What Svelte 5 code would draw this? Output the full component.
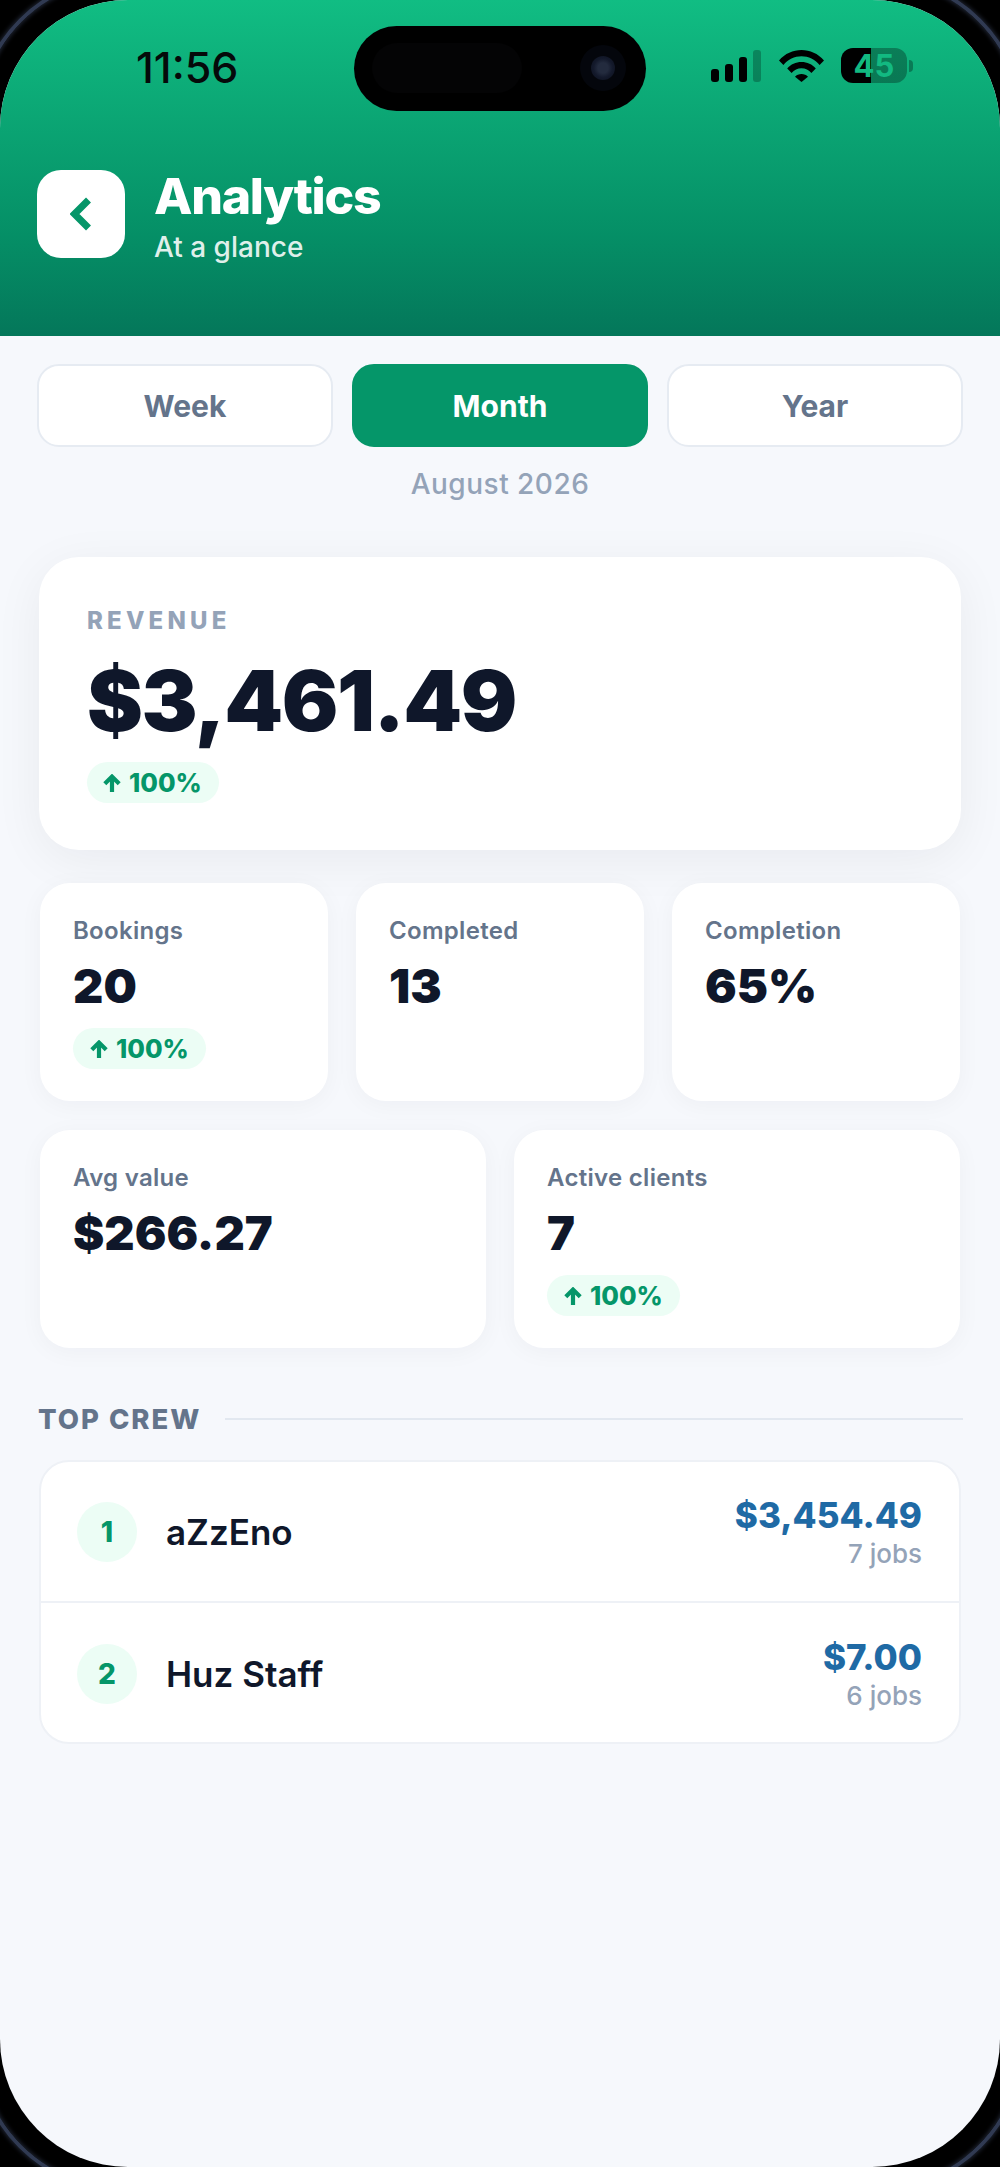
<script>
  const row1 = [
    { label: 'Bookings', value: '20', up: true },
    { label: 'Completed', value: '13' },
    { label: 'Completion', value: '65%' }
  ];
  const row2 = [
    { label: 'Avg value', value: '$266.27' },
    { label: 'Active clients', value: '7', up: true }
  ];
  const crew = [
    { rank: 1, name: 'aZzEno', amount: '$3,454.49', jobs: '7 jobs' },
    { rank: 2, name: 'Huz Staff', amount: '$7.00', jobs: '6 jobs' }
  ];
</script>

{#snippet pill()}
  <span class="pill">
    <svg class="arrow" viewBox="0 0 18 18" width="18" height="18" aria-hidden="true">
      <path d="M9 18V3.500M1.800 9.800 9 2.600l7.200 7.200" fill="none" stroke="currentColor" stroke-width="4.2" />
    </svg>
    100%
  </span>
{/snippet}

{#snippet stat(s)}
  <div class="stat">
    <div class="stat-label">{s.label}</div>
    <div class="stat-value">{s.value}</div>
    {#if s.up}{@render pill()}{/if}
  </div>
{/snippet}

<div class="phone">
  <div class="ring"></div>
  <div class="screen">
    <header class="header">
      <div class="status">
        <span class="time">11:56</span>
        <div class="status-icons">
          <div class="signal">
            <i class="b1"></i><i class="b2"></i><i class="b3"></i><i class="b4"></i>
          </div>
          <svg class="wifi" viewBox="0 0 45 33" width="45" height="33" aria-hidden="true">
            <path d="M0 11.5C6 4.5 14 1 22.5 1S39 4.5 45 11.5l-4.4 4.4C36 10.2 29.5 7.2 22.5 7.2S9 10.2 4.4 15.9Z" />
            <path d="M8.2 19.6c3.6-4.4 8.6-6.6 14.3-6.6s10.7 2.2 14.3 6.6l-4.4 4.3c-2.500-3-6-4.700-9.900-4.700s-7.400 1.700-9.900 4.700Z" />
            <path d="M16 27.700c1.500-1.800 3.900-2.800 6.500-2.800s5 1 6.500 2.800L22.500 33Z" />
          </svg>
          <div class="battery"><span>45</span></div>
          <i class="cap"></i>
        </div>
      </div>
      <div class="island">
        <div class="island-pill"></div>
        <div class="camera"><div class="lens"></div></div>
      </div>
      <div class="title-row">
        <div class="back">
          <svg viewBox="0 0 22 34" width="22" height="34" aria-hidden="true">
            <path d="M18.500 3 4.500 17l14 14" fill="none" stroke="#059669" stroke-width="7" />
          </svg>
        </div>
        <div class="title-text">
          <h1>Analytics</h1>
          <p>At a glance</p>
        </div>
      </div>
    </header>

    <main class="content">
      <div class="tabs">
        <div class="tab">Week</div>
        <div class="tab active">Month</div>
        <div class="tab">Year</div>
      </div>
      <div class="period">August 2026</div>

      <section class="revenue">
        <div class="rev-label">REVENUE</div>
        <div class="rev-value">$3,461.49</div>
        {@render pill()}
      </section>

      <div class="grid three">
        {#each row1 as s}{@render stat(s)}{/each}
      </div>
      <div class="grid two">
        {#each row2 as s}{@render stat(s)}{/each}
      </div>

      <div class="section-head">
        <span>TOP CREW</span>
        <div class="rule"></div>
      </div>

      <div class="crew">
        {#each crew as c}
          <div class="crew-row">
            <div class="rank">{c.rank}</div>
            <div class="name">{c.name}</div>
            <div class="right">
              <div class="amount">{c.amount}</div>
              <div class="jobs">{c.jobs}</div>
            </div>
          </div>
        {/each}
      </div>
    </main>
  </div>
</div>

<style>
  :global(body) {
    margin: 0;
    background: #000;
  }
  .phone {
    position: relative;
    width: 1000px;
    height: 2167px;
    overflow: hidden;
    background: #000;
    font-family: Inter, 'Liberation Sans', sans-serif;
  }
  .ring {
    position: absolute;
    inset: -25px;
    border-radius: 150px;
    border: 4px solid #303a52;
    box-shadow: 0 0 4px 1px rgba(70, 84, 115, 0.45), inset 0 0 4px 1px rgba(70, 84, 115, 0.45);
  }
  .screen {
    position: relative;
    width: 1000px;
    height: 2167px;
    border-radius: 128px;
    overflow: hidden;
    background: #f6f8fc;
  }
  .header {
    position: relative;
    height: 336px;
    box-sizing: border-box;
    background: linear-gradient(180deg, #11bd83 0%, #0ba674 35%, #058f66 70%, #04775a 100%);
  }
  .status {
    height: 134px;
    box-sizing: border-box;
    padding: 42px 0 0 136px;
    display: flex;
    justify-content: space-between;
  }
  .time {
    font-size: 43px;
    line-height: 50px;
    font-weight: 500;
    color: #050a0a;
  }
  .status-icons {
    display: flex;
    align-items: flex-start;
    padding: 7px 87px 0 0;
  }
  .signal {
    display: flex;
    align-items: flex-end;
    gap: 6px;
    height: 33px;
    margin-right: 18px;
  }
  .signal i {
    width: 8px;
    background: #000;
    border-radius: 3px;
    display: block;
  }
  .b1 { height: 13px; }
  .b2 { height: 18px; }
  .b3 { height: 25px; }
  .signal .b4 {
    height: 32px;
    background: rgba(0, 0, 0, 0.25);
  }
  .wifi {
    fill: #000;
    margin-right: 17px;
  }
  .battery {
    width: 66px;
    height: 35px;
    border-radius: 12px;
    background: linear-gradient(90deg, #000 45%, rgba(0, 0, 0, 0.3) 45%);
    color: #12b981;
    font-size: 31px;
    font-weight: 700;
    line-height: 35px;
    text-align: center;
    margin-top: -1px;
  }
  .cap {
    width: 4px;
    height: 12px;
    margin: 11px 0 0 2px;
    border-radius: 0 4px 4px 0;
    background: rgba(0, 0, 0, 0.3);
    display: block;
  }
  .island {
    position: absolute;
    left: 354px;
    top: 26px;
    width: 292px;
    height: 85px;
    border-radius: 43px;
    background: #000;
  }
  .island-pill {
    position: absolute;
    left: 18px;
    top: 17px;
    width: 150px;
    height: 50px;
    border-radius: 25px;
    background: #040405;
  }
  .camera {
    position: absolute;
    left: 226px;
    top: 19px;
    width: 46px;
    height: 46px;
    border-radius: 50%;
    background: #04060c;
  }
  .lens {
    margin: 11px;
    width: 24px;
    height: 24px;
    border-radius: 50%;
    background: radial-gradient(circle, #232b3e 0 30%, #141a2c 55%, #0a0e1a 100%);
  }
  .title-row {
    display: flex;
    align-items: flex-start;
    gap: 29px;
    padding: 36px 37px 0;
  }
  .back {
    width: 88px;
    height: 88px;
    border-radius: 24px;
    background: #fff;
    display: flex;
    align-items: center;
    justify-content: center;
  }
  .title-text {
    margin-top: -1px;
  }
  h1 {
    margin: 0;
    font-size: 50px;
    line-height: 54px;
    font-weight: 800;
    letter-spacing: -1.3px;
    color: #fff;
  }
  .title-row p {
    margin: 8px 0 0;
    font-size: 28px;
    line-height: 32px;
    font-weight: 500;
    color: rgba(255, 255, 255, 0.88);
  }
  .content {
    padding: 28px 39px 0;
  }
  .tabs {
    display: grid;
    grid-template-columns: repeat(3, 1fr);
    gap: 19px;
    margin: 0 -2px;
  }
  .tab {
    height: 83px;
    box-sizing: border-box;
    border: 2px solid #e6ebf2;
    border-radius: 22px;
    background: #fff;
    color: #64748b;
    font-size: 30px;
    font-weight: 700;
    display: flex;
    align-items: center;
    justify-content: center;
  }
  .tab.active {
    background: #059669;
    border-color: #059669;
    color: #fff;
  }
  .period {
    margin-top: 20px;
    text-align: center;
    font-size: 28px;
    line-height: 34px;
    font-weight: 500;
    letter-spacing: 0.5px;
    color: #94a3b8;
  }
  .revenue {
    margin-top: 56px;
    height: 293px;
    box-sizing: border-box;
    padding: 48px 48px 0;
    border-radius: 40px;
    background: #fff;
    box-shadow: 0 10px 50px rgba(15, 23, 42, 0.06);
  }
  .rev-label {
    font-size: 24px;
    line-height: 32px;
    font-weight: 800;
    letter-spacing: 4.2px;
    color: #94a3b8;
  }
  .rev-value {
    margin-top: 16px;
    font-size: 84px;
    line-height: 96px;
    font-weight: 900;
    letter-spacing: -1.5px;
    color: #0f172a;
  }
  .pill {
    display: inline-flex;
    align-items: center;
    gap: 8px;
    height: 41px;
    padding: 0 17px 0 16px;
    border-radius: 21px;
    background: #ecfdf5;
    color: #059669;
    font-size: 25.500px;
    font-weight: 800;
  }
  .revenue .pill {
    margin-top: 13px;
    vertical-align: top;
  }
  .arrow {
    flex: none;
  }
  .grid {
    display: grid;
    gap: 28px;
    margin: 33px 1px 0;
  }
  .three {
    grid-template-columns: repeat(3, 1fr);
  }
  .two {
    grid-template-columns: repeat(2, 1fr);
    margin-top: 29px;
  }
  .stat {
    height: 218px;
    box-sizing: border-box;
    padding: 32px 33px 0;
    border-radius: 30px;
    background: #fff;
    box-shadow: 0 4px 24px rgba(15, 23, 42, 0.04);
  }
  .stat-label {
    font-size: 24px;
    line-height: 32px;
    font-weight: 600;
    letter-spacing: 0.3px;
    color: #64748b;
  }
  .stat-value {
    margin-top: 11px;
    font-size: 47px;
    line-height: 56px;
    font-weight: 900;
    color: #0f172a;
  }
  .stat .pill {
    margin-top: 14px;
    vertical-align: top;
    padding: 0 17px;
  }
  .section-head {
    display: flex;
    align-items: center;
    gap: 24px;
    margin: 54px -2px 0 -1px;
    height: 34px;
    font-size: 27.500px;
    font-weight: 800;
    letter-spacing: 2px;
    color: #64748b;
  }
  .rule {
    flex: 1;
    height: 2px;
    background: #e2e8f0;
  }
  .crew {
    margin-top: 24px;
    box-sizing: border-box;
    height: 284px;
    border: 2px solid #eef1f6;
    border-radius: 30px;
    background: #fff;
  }
  .crew-row {
    height: 141px;
    box-sizing: border-box;
    padding: 0 37px 0 36px;
    display: flex;
    align-items: center;
  }
  .crew-row:first-child {
    border-bottom: 2px solid #eef1f6;
  }
  .rank {
    width: 60px;
    height: 60px;
    border-radius: 50%;
    background: #ecfdf5;
    color: #059669;
    font-size: 28px;
    font-weight: 800;
    display: flex;
    align-items: center;
    justify-content: center;
    margin-right: 29px;
  }
  .name {
    flex: 1;
    font-size: 35px;
    font-weight: 600;
    color: #0f172a;
  }
  .right {
    text-align: right;
    padding-top: 2px;
  }
  .amount {
    font-size: 35px;
    line-height: 40px;
    font-weight: 800;
    color: #1f6aa5;
  }
  .jobs {
    font-size: 26px;
    line-height: 32px;
    font-weight: 500;
    color: #94a3b8;
    margin-top: 3px;
  }
</style>
